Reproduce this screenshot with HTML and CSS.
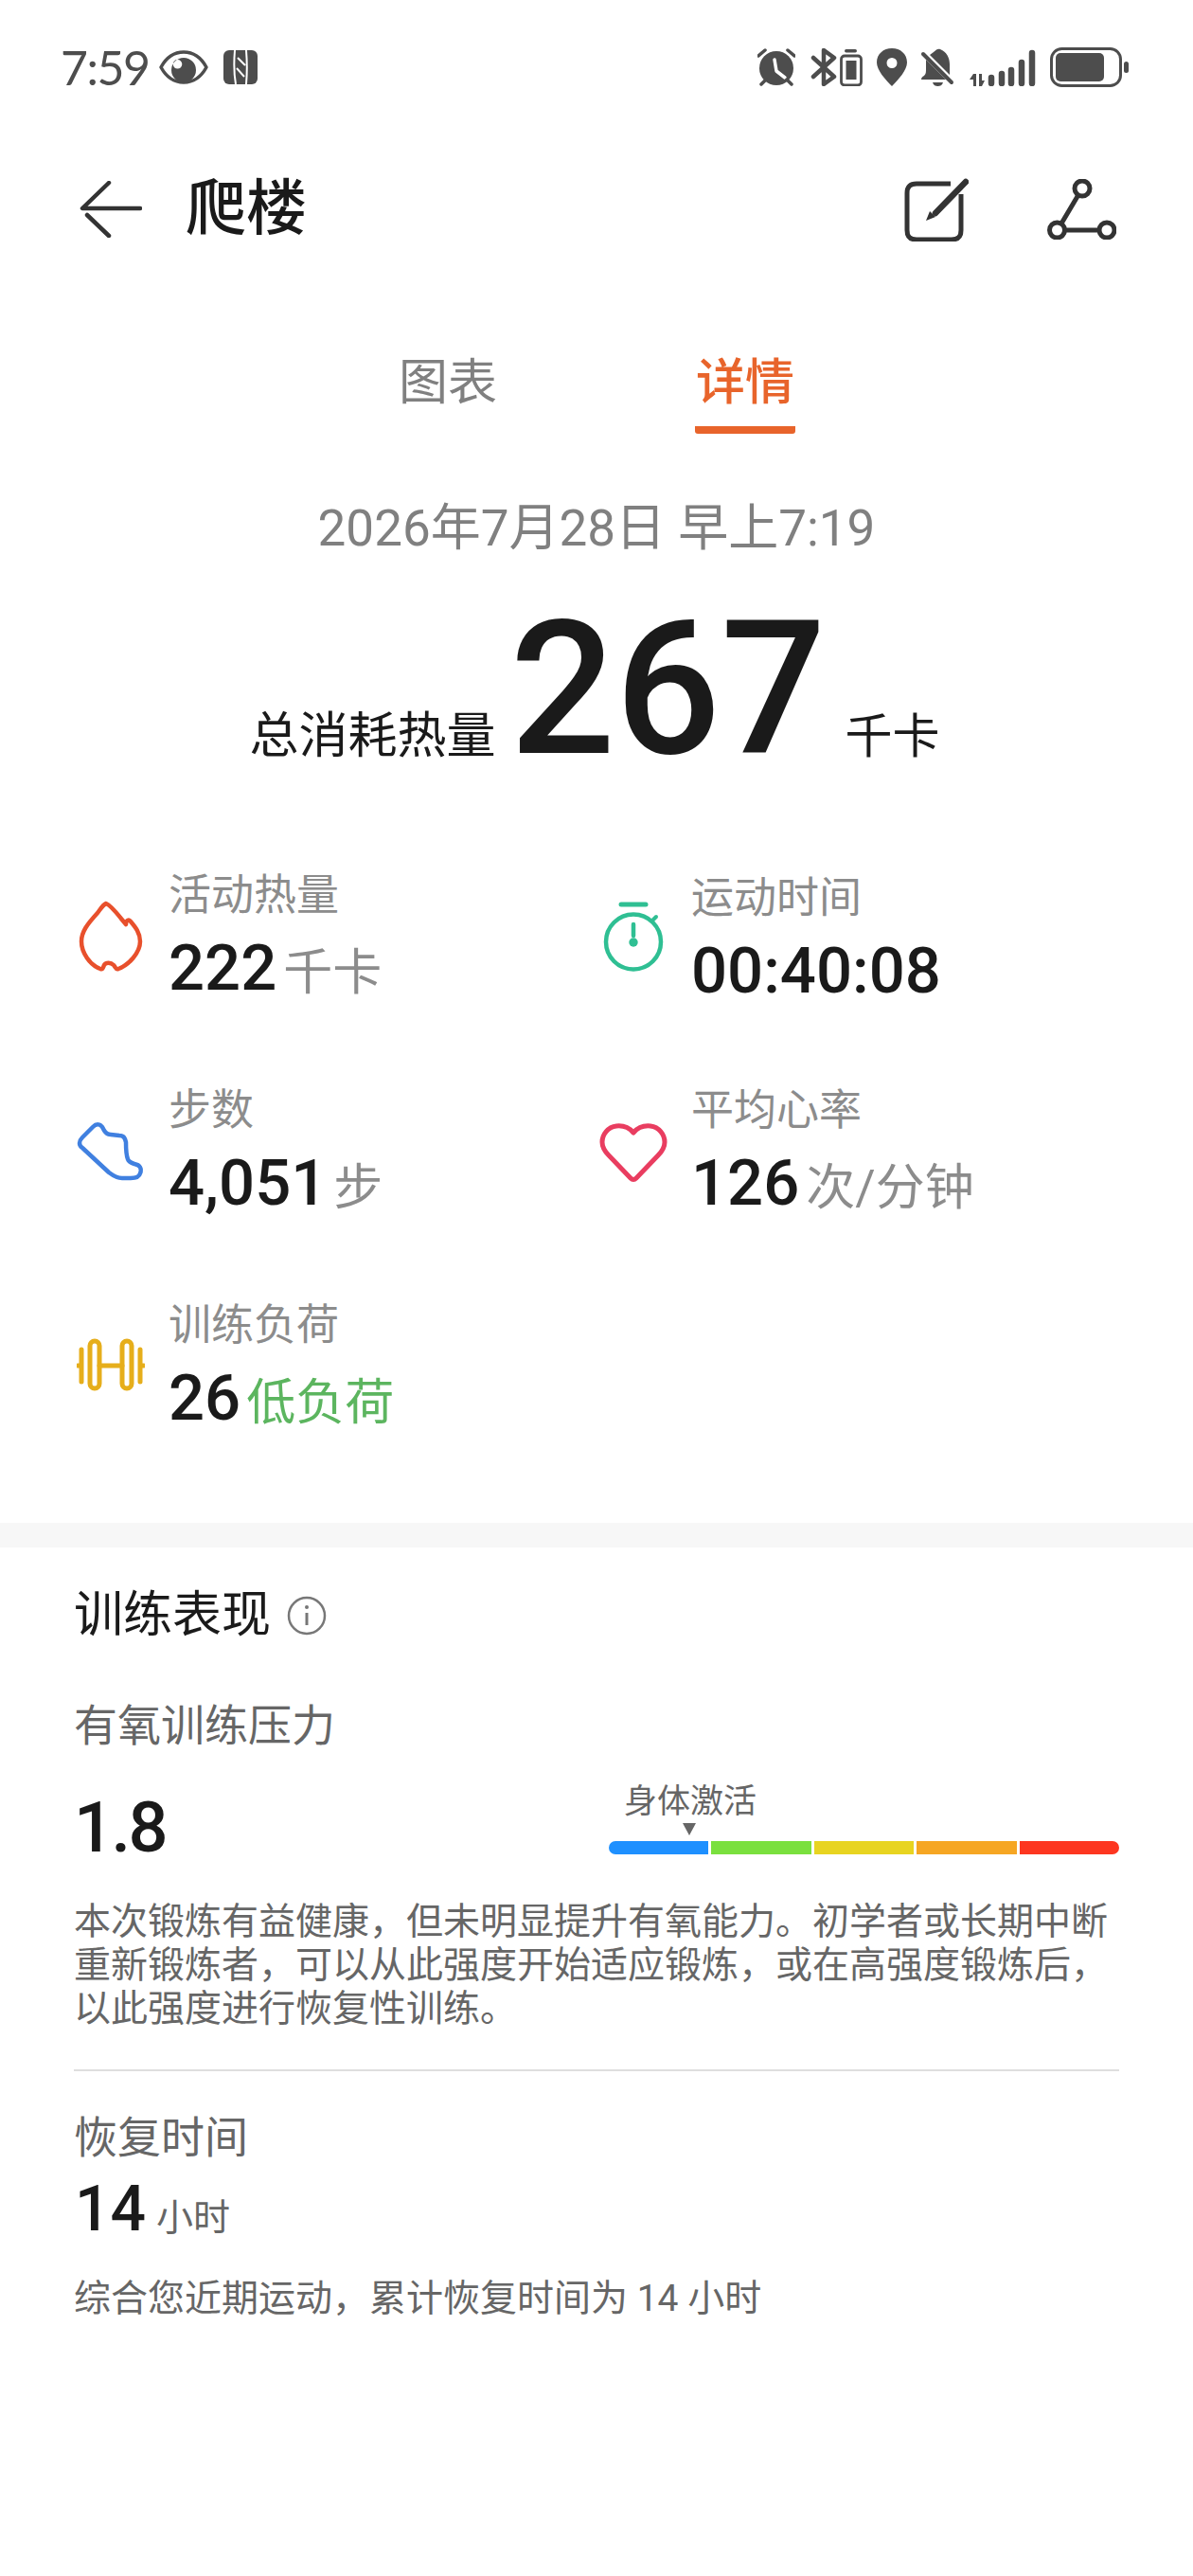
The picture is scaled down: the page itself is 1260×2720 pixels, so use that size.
FILE: index.html
```html
<!DOCTYPE html>
<html lang="zh-CN">
<head>
<meta charset="utf-8">
<title>爬楼</title>
<link rel="stylesheet" href="styles.css">
</head>
<body>
<div class="page">
  <header class="statusbar">
    <div class="status-left">
      <span class="clock">7:59</span>
      <svg class="ic-eye" viewBox="0 0 52 36"><path fill="none" stroke="#4d4d4d" stroke-width="3.500" stroke-linejoin="round" d="M2 18C8 7 16 2 26 2 36 2 44 7 50 18 44 29 36 34 26 34 16 34 8 29 2 18Z"/><path fill="#4d4d4d" fill-rule="evenodd" d="M26 8A13 13 0 1 1 26 34 13 13 0 0 1 26 8ZM19.500 10A4.800 4.800 0 0 0 19.500 19.600 4.800 4.800 0 0 0 19.500 10Z"/></svg>
      <svg class="ic-nfc" viewBox="0 0 36 36"><rect width="36" height="36" rx="6" fill="#4d4d4d"/><g fill="none" stroke="#fff" stroke-width="2"><path d="M12 0C11 12 11 25 13 36M24 0C25 12 25 25 24 36M15 8 23 16M14 19 22 28"/></g></svg>
    </div>
    <div class="status-right">
      <svg class="ic-alarm" viewBox="0 0 40 40"><circle cx="20" cy="21" r="18" fill="#4d4d4d"/><path d="M18 12 20 24 29 31" fill="none" stroke="#fff" stroke-width="3.500" stroke-linecap="round" stroke-linejoin="round"/><path d="M1 8 8 2M32 2 39 8M4 38 9 33M36 38 31 33" stroke="#4d4d4d" stroke-width="3.500" stroke-linecap="round"/></svg>
      <svg class="ic-bt" viewBox="0 0 56 40"><path d="M4 10 26 30 15 38V2L26 10 4 30" fill="none" stroke="#4d4d4d" stroke-width="4.500" stroke-linejoin="round" stroke-linecap="round"/><rect x="37" y="1" width="13" height="3.500" rx="1.700" fill="#4d4d4d"/><rect x="33.500" y="8" width="21" height="31" rx="3.500" fill="none" stroke="#4d4d4d" stroke-width="2.800"/><rect x="38.500" y="13" width="11" height="20" fill="#4d4d4d"/></svg>
      <svg class="ic-loc" viewBox="0 0 32 40"><path fill="#4d4d4d" fill-rule="evenodd" d="M16 0C25 0 32 6 32 15 32 23 23 33 16 40 9 33 0 23 0 15 0 6 7 0 16 0ZM16 10A5.500 5.500 0 1 0 16 21 5.500 5.500 0 0 0 16 10Z"/></svg>
      <svg class="ic-bell" viewBox="0 0 36 40"><path fill="#4d4d4d" d="M10 7 14 4C17 1 19 0 21 1 28 4 31 10 31 17V28ZM6 12 27 33H1C1 31 2 30 4 29 6 27 6 25 6 22ZM13 36H24C23 39 21 40 18.500 40 16 40 14 39 13 36Z"/><path d="M3 6 33 36" stroke="#4d4d4d" stroke-width="4" stroke-linecap="round"/></svg>
      <svg class="ic-signal" viewBox="0 0 71 40"><path fill="#4d4d4d" d="M5 27H8V40H5V33H1ZM11 27H14V34H17L14 40H11Z"/><g stroke="#4d4d4d" stroke-width="6.500" stroke-linecap="round"><path d="M24 31V37M35 27V37M45 23V37M56 15V37M67 5V37"/></g></svg>
      <svg class="ic-batt" viewBox="0 0 84 42"><rect x="1.500" y="1.500" width="73" height="39" rx="11" fill="none" stroke="#4d4d4d" stroke-width="3"/><rect x="6" y="6" width="51" height="30" rx="5" fill="#4d4d4d"/><rect x="78" y="15" width="5" height="12" rx="2.500" fill="#4d4d4d"/></svg>
    </div>
  </header>

  <nav class="appbar">
    <svg class="ic-back" viewBox="0 0 66 60"><path d="M31 2 3 29H64M8 36 31 58" fill="none" stroke="#333" stroke-width="4.500" stroke-linecap="round" stroke-linejoin="round"/></svg>
    <h1 class="title">爬楼</h1>
    <svg class="ic-edit" viewBox="0 0 68 67"><path d="M49 6H13C6 6 3 9 3 16V55C3 62 6 65 13 65H50C57 65 60 62 60 55V17" fill="none" stroke="#333" stroke-width="5"/><path d="M65 4 33 37" stroke="#333" stroke-width="6.500" stroke-linecap="round"/><path d="M27 35 33 41 23 45Z" fill="#333"/></svg>
    <svg class="ic-route" viewBox="0 0 73 64"><g fill="none" stroke="#333" stroke-width="5"><circle cx="37" cy="10" r="8"/><circle cx="10.500" cy="54" r="8"/><circle cx="63" cy="54" r="8"/><path d="M32.500 17.500 15 47M18.500 54H55"/></g></svg>
  </nav>

  <div class="tabs">
    <div class="tab">图表</div>
    <div class="tab tab-active">详情</div>
  </div>

  <div class="date">2026年7月28日 早上7:19</div>

  <div class="total">
    <span class="total-label">总消耗热量</span>
    <span class="total-num">267</span>
    <span class="total-unit">千卡</span>
  </div>

  <section class="stats">
    <div class="stat">
      <div class="stat-icon"><svg class="ic-s" viewBox="-3 -3 72 80"><path d="M28 3C33 5 40 14 44 19L49 25C49 21 52 19 54 22 59 28 64 34 64 43 64 55 52 68 41 72 38 73 38 70 36 68 33 65 28 65 26 68 25 70 25 73 22 72 11 68 2 55 2 43 2 33 8 25 19 13 22 9 25 4 28 3Z" fill="none" stroke="#e8502c" stroke-width="4.500" stroke-linejoin="round"/></svg></div>
      <div class="stat-body"><div class="stat-label">活动热量</div><div class="stat-value"><b>222</b><span class="unit">千卡</span></div></div>
    </div>
    <div class="stat">
      <div class="stat-icon"><svg class="ic-s" viewBox="0 0 72 80"><g fill="none" stroke="#2fbf93" stroke-width="4.500" stroke-linecap="round"><circle cx="36" cy="46.500" r="29"/><path d="M23 7H49" stroke-width="5"/><path d="M36 28V40"/><path d="M57 23 60 20" stroke-width="4"/></g><circle cx="36" cy="47" r="4.700" fill="#2fbf93"/></svg></div>
      <div class="stat-body"><div class="stat-label">运动时间</div><div class="stat-value"><b>00:40:08</b></div></div>
    </div>
    <div class="stat">
      <div class="stat-icon"><svg class="ic-s" viewBox="0 0 72 80"><path d="M6 37C2 34 2 30 6 26L17 15C21 11 25 12 27 15 29 19 31 23 36 23L45 24C50 24 51 27 52 31 52 38 52 44 54 49 55 52 58 53 61 54 67 55 69 59 67 64 66 68 62 69 57 69L48 69C42 69 38 66 34 63Z" fill="none" stroke="#4080e0" stroke-width="4.500" stroke-linejoin="round"/></svg></div>
      <div class="stat-body"><div class="stat-label">步数</div><div class="stat-value"><b>4,051</b><span class="unit">步</span></div></div>
    </div>
    <div class="stat">
      <div class="stat-icon"><svg class="ic-s" viewBox="0 0 72 80"><path d="M36 21C30 14 23 13.500 18 14 9 15 3 23 3 31 3 37 6 41 10 45L33 69C35 71 37 71 39 69L62 45C66 41 69 37 69 31 69 23 63 15 54 14 49 13.500 42 14 36 21Z" fill="none" stroke="#e93d60" stroke-width="5" stroke-linejoin="round"/></svg></div>
      <div class="stat-body"><div class="stat-label">平均心率</div><div class="stat-value"><b>126</b><span class="unit">次/分钟</span></div></div>
    </div>
    <div class="stat">
      <div class="stat-icon"><svg class="ic-s" viewBox="0 0 72 80"><g fill="none" stroke="#e6ae1b" stroke-width="5" stroke-linecap="round"><rect x="14" y="14" width="10" height="50" rx="5"/><rect x="48" y="14" width="10" height="50" rx="5"/><path d="M24 40H48M5 23V57M67 23V57M1 40H2M70 40H71"/></g></svg></div>
      <div class="stat-body"><div class="stat-label">训练负荷</div><div class="stat-value"><b>26</b><span class="load">低负荷</span></div></div>
    </div>
  </section>

  <div class="band"></div>

  <section class="perf">
    <div class="perf-head">
      <h2 class="perf-title">训练表现</h2>
      <svg class="ic-info" viewBox="0 0 42 42"><circle cx="21" cy="21" r="19" fill="none" stroke="#777" stroke-width="2.500"/><circle cx="21" cy="12" r="2" fill="#777"/><path d="M21 18V31" stroke="#777" stroke-width="3"/></svg>
    </div>
    <div class="perf-sub">有氧训练压力</div>
    <div class="metric">
      <div class="metric-num">1.8</div>
      <div class="gauge">
        <div class="gauge-label">身体激活</div>
        <div class="gauge-arrow"></div>
        <div class="gauge-bar"><i class="seg s1"></i><i class="seg s2"></i><i class="seg s3"></i><i class="seg s4"></i><i class="seg s5"></i></div>
      </div>
    </div>
    <p class="desc">本次锻炼有益健康，但未明显提升有氧能力。初学者或长期中断重新锻炼者，可以从此强度开始适应锻炼，或在高强度锻炼后，以此强度进行恢复性训练。</p>
    <hr class="rule">
    <div class="rec-label">恢复时间</div>
    <div class="rec-value"><b>14</b><span>小时</span></div>
    <p class="rec-desc">综合您近期运动，累计恢复时间为 14 小时</p>
  </section>
</div>
</body>
</html>
```

FILE: styles.css
```css
* { box-sizing: border-box; }
html, body { margin: 0; padding: 0; background: #fff; }
body { font-family: Roboto, "Noto Sans CJK SC", sans-serif; color: #1a1a1a; }
.page { width: 1260px; height: 2720px; overflow: hidden; }
svg { display: block; flex: none; }

.statusbar { height: 142px; padding: 0 67px 0 64px; display: flex; justify-content: space-between; align-items: center; }
.status-left, .status-right { display: flex; align-items: center; }
.clock { font-family: Lato, sans-serif; font-size: 50px; letter-spacing: -1.5px; line-height: 60px; color: #4d4d4d; width: 104px; white-space: nowrap; }
.ic-eye { width: 52px; height: 36px; }
.ic-nfc { width: 36px; height: 36px; margin-left: 16px; }
.ic-alarm { width: 40px; height: 40px; }
.ic-bt { width: 56px; height: 40px; margin-left: 15px; }
.ic-loc { width: 32px; height: 40px; margin-left: 15px; }
.ic-bell { width: 36px; height: 40px; margin-left: 14px; }
.ic-signal { width: 71px; height: 40px; margin-left: 15px; }
.ic-batt { width: 84px; height: 42px; margin-left: 15px; }

.appbar { height: 158px; padding: 0 81px 0 84px; display: flex; align-items: center; }
.ic-back { width: 66px; height: 60px; }
.title { margin: 0 0 0 46px; font-size: 64px; line-height: 80px; font-weight: 500; flex: 1; }
.ic-edit { width: 68px; height: 67px; }
.ic-route { width: 73px; height: 64px; margin-left: 83px; }

.tabs { height: 158px; padding-top: 72px; display: flex; justify-content: center; gap: 208px; }
.tab { font-size: 52px; line-height: 66px; height: 86px; color: #808080; padding: 0 1px; }
.tab-active { color: #e8642b; font-weight: 500; border-bottom: 8px solid #e8642b; border-radius: 0 0 3px 3px; }

.date { text-align: center; font-size: 53px; line-height: 66px; color: #808080; margin-top: 67px; }

.total { display: flex; justify-content: center; align-items: baseline; margin-top: 23px; height: 228px; line-height: 228px; padding-right: 4px; }
.total-label { font-size: 52px; }
.total-num { font-size: 196px; font-weight: 500; margin: 0 20px 0 15px; }
.total-unit { font-size: 50px; }

.stats { display: grid; grid-template-columns: 555px 1fr; grid-auto-rows: 227px; padding-left: 78px; margin-top: 36px; margin-bottom: 49px; }
.stat { display: flex; align-items: center; }
.stat-icon { width: 100px; padding-left: 3px; padding-bottom: 8px; }
.stat:nth-child(even) .stat-icon { width: 97px; padding-left: 0; }
.ic-s { width: 72px; height: 80px; }
.stat-label { font-size: 45px; line-height: 60px; color: #8c8c8c; }
.stat-value { display: flex; align-items: baseline; line-height: 80px; margin-top: 6px; }
.stat-value b { font-size: 67px; font-weight: 500; }
.unit { font-size: 52px; color: #8c8c8c; margin-left: 7px; }
.load { font-size: 52px; color: #5cb55f; margin-left: 6px; }

.band { height: 26px; background: #f7f7f7; }

.perf { padding: 0 78px; }
.perf-head { display: flex; align-items: center; height: 96px; margin-top: 24px; }
.perf-title { margin: 0; font-size: 52px; line-height: 70px; font-weight: 400; }
.ic-info { width: 42px; height: 42px; margin-left: 17px; }
.perf-sub { font-size: 46px; line-height: 60px; color: #666; margin-top: 38px; }
.metric { display: flex; justify-content: space-between; align-items: flex-start; margin-top: 24px; }
.metric-num { font-size: 74px; letter-spacing: -2.5px; line-height: 90px; font-weight: 500; padding-top: 9px; }
.gauge { width: 539px; margin-top: 5px; }
.gauge-label { font-size: 35px; line-height: 44px; color: #666; padding-left: 16px; }
.gauge-arrow { width: 0; height: 0; margin-left: 78px; border-left: 7px solid transparent; border-right: 7px solid transparent; border-top: 13px solid #666; }
.gauge-bar { display: flex; gap: 3px; margin-top: 6px; height: 14px; border-radius: 7px; overflow: hidden; }
.seg { flex: 1; display: block; }
.s1 { background: #1e90ff; }
.s2 { background: #7ae03e; }
.s3 { background: #e8d421; }
.s4 { background: #f6a623; }
.s5 { background: #fd3620; }
.desc { margin: 31px 0 0; font-size: 39px; line-height: 46px; color: #666; }
.rule { margin: 41px 0 0; border: 0; border-top: 2px solid #dedede; }
.rec-label { font-size: 46px; line-height: 60px; color: #666; margin-top: 40px; }
.rec-value { display: flex; align-items: baseline; line-height: 80px; margin-top: 6px; }
.rec-value b { font-size: 66px; font-weight: 500; margin-left: 1px; }
.rec-value span { font-size: 39px; color: #666; margin-left: 11px; }
.rec-desc { margin: 20px 0 0; font-size: 39px; line-height: 50px; color: #666; }
```
